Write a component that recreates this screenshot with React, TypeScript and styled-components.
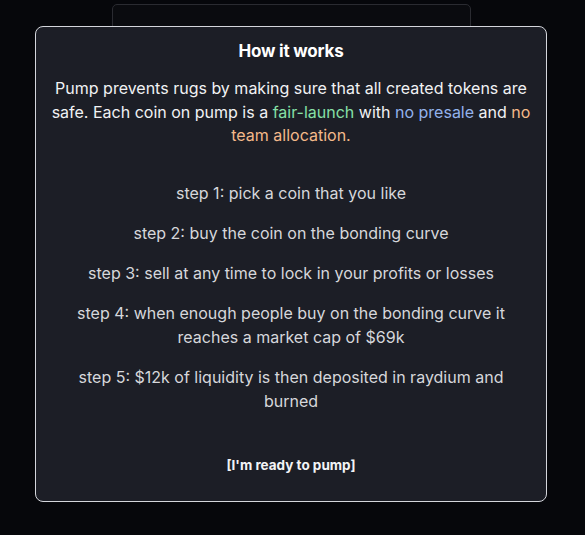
import * as React from "react";
import styled, { createGlobalStyle } from "styled-components";

const GlobalStyle = createGlobalStyle`
  html, body {
    margin: 0;
    height: 100%;
    background: #06070b;
  }
  body {
    font-family: Inter, "Noto Sans", sans-serif;
    color: #f3f4f6;
  }
`;

const Page = styled.div`
  position: relative;
  width: 585px;
  height: 535px;
  overflow: hidden;
  display: flex;
  justify-content: center;
  padding-top: 4px;
  box-sizing: border-box;
`;

const BackCard = styled.div`
  width: 357px;
  height: 200px;
  margin-left: -2px;
  border: 1px solid #2a2b31;
  border-radius: 5px;
  background: #0a0b0f;
`;

const Modal = styled.div`
  position: absolute;
  top: 26px;
  left: 35px;
  width: 512px;
  height: 476px;
  box-sizing: border-box;
  border: 1px solid #d4d6dc;
  border-radius: 8px;
  background: #1c1e26;
  padding: 12px 8px 0;
  display: flex;
  flex-direction: column;
  align-items: center;
  text-align: center;
`;

const Title = styled.h2`
  margin: 0;
  font-size: 17px;
  font-weight: 700;
  line-height: 24px;
  color: #ffffff;
  letter-spacing: -0.2px;
`;

const Intro = styled.p`
  margin: 14px 0 0;
  font-size: 16px;
  line-height: 23.5px;
  color: #f1f2f4;
`;

const Tone = styled.span<{ $tone: "green" | "blue" | "orange" }>`
  color: ${(p) =>
    p.$tone === "green" ? "#86e0a6" : p.$tone === "blue" ? "#93b2ec" : "#f4b98a"};
`;

const Steps = styled.div`
  margin-top: 33px;
  display: flex;
  flex-direction: column;
  gap: 16px;
  width: 440px;
`;

const Step = styled.p`
  margin: 0;
  font-size: 16px;
  line-height: 24px;
  color: #d6d7db;
`;

const ReadyButton = styled.button`
  margin-top: 44px;
  background: none;
  border: none;
  padding: 0;
  font-family: inherit;
  font-size: 13.5px;
  font-weight: 700;
  color: #f3f4f6;
  cursor: pointer;
`;

const steps = [
  "step 1: pick a coin that you like",
  "step 2: buy the coin on the bonding curve",
  "step 3: sell at any time to lock in your profits or losses",
  "step 4: when enough people buy on the bonding curve it reaches a market cap of $69k",
  "step 5: $12k of liquidity is then deposited in raydium and burned",
];

export default function App() {
  return (
    <>
      <GlobalStyle />
      <Page>
        <BackCard />
        <Modal>
          <Title>How it works</Title>
          <Intro>
            Pump prevents rugs by making sure that all created tokens are safe.
            Each coin on pump is a <Tone $tone="green">fair-launch</Tone> with{" "}
            <Tone $tone="blue">no presale</Tone> and{" "}
            <Tone $tone="orange">no team allocation.</Tone>
          </Intro>
          <Steps>
            {steps.map((s) => (
              <Step key={s}>{s}</Step>
            ))}
          </Steps>
          <ReadyButton>[I'm ready to pump]</ReadyButton>
        </Modal>
      </Page>
    </>
  );
}
